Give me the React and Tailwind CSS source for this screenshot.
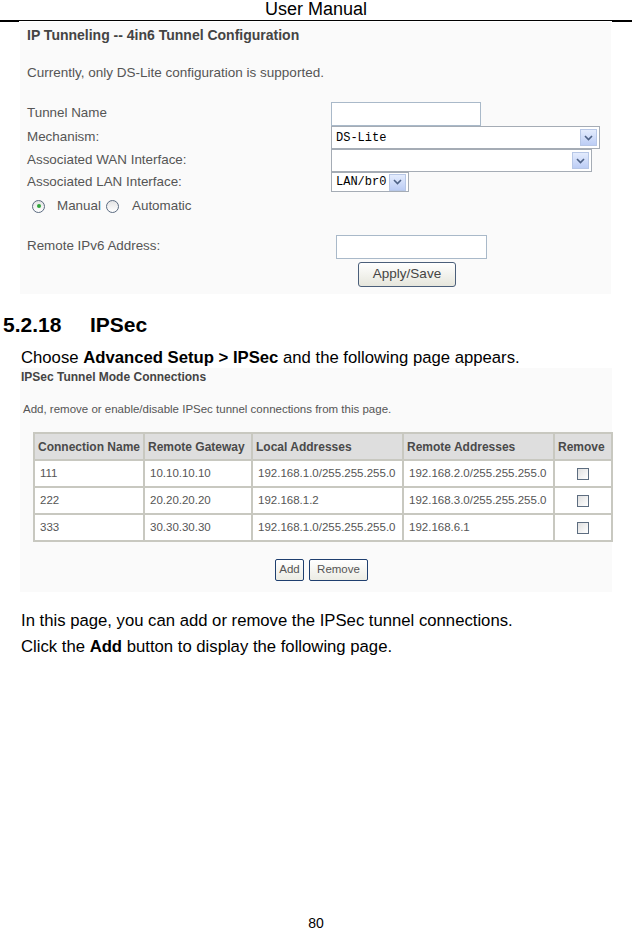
import React from 'react';

const shot = "font-['Liberation_Sans',Arial,sans-serif] text-[#555]";

// little blue chevron box used by the fake <select>s
const Arrow = () => (
  <span className="flex h-[17px] w-[17px] items-center justify-center border border-[#b7c7e6] bg-gradient-to-b from-[#e4ecfd] to-[#bccdf5]">
    <svg width="9" height="6" viewBox="0 0 9 6">
      <path d="M1 1 L4.5 4.5 L8 1" fill="none" stroke="#4d6185" strokeWidth="1.6" />
    </svg>
  </span>
);

const FakeSelect = ({ value, width }) => (
  <div
    className={`flex h-full items-center justify-between border border-[#a5acb5] bg-white pl-[4px] pr-[2px] ${width}`}
  >
    <span className="font-['Liberation_Mono',monospace] text-[12px] text-black">{value}</span>
    <Arrow />
  </div>
);

const Radio = ({ checked }) => (
  <span className="flex h-[13px] w-[13px] shrink-0 items-center justify-center rounded-full border border-[#5a6a80] bg-gradient-to-b from-[#e4e4e4] to-white">
    {checked && <span className="h-[4px] w-[4px] rounded-full bg-[#2fa53a]" />}
  </span>
);

const Row = ({ label, h, children }) => (
  <div className={`flex items-center ${h}`}>
    <div className="w-[304px] text-[13.4px]">{label}</div>
    {children}
  </div>
);

const tunnels = [
  { name: '111', gw: '10.10.10.10', local: '192.168.1.0/255.255.255.0', remote: '192.168.2.0/255.255.255.0' },
  { name: '222', gw: '20.20.20.20', local: '192.168.1.2', remote: '192.168.3.0/255.255.255.0' },
  { name: '333', gw: '30.30.30.30', local: '192.168.1.0/255.255.255.0', remote: '192.168.6.1' },
];

const th = 'border-2 border-[#c8c8c0] px-[3px] text-left font-bold text-[12px] text-[#4a4a4a] whitespace-nowrap';
const td = 'border-2 border-[#c8c8c0] px-[5px] text-[11.5px] whitespace-nowrap';

export default function App() {
  return (
    <div className="h-[932px] w-[632px] overflow-hidden bg-white font-['Liberation_Sans',Arial,sans-serif] text-black">
      {/* page header */}
      <div className="h-[20px] text-center text-[18px] leading-[18px]">User Manual</div>
      <div className="flex items-start">
        <div className="h-[2px] w-[19px] bg-black" />
        <div className="h-px flex-1 bg-black" />
        <div className="h-[2px] w-[20px] bg-black" />
      </div>

      {/* screenshot: 4in6 tunnel */}
      <div className={`ml-[20px] h-[272px] w-[591px] bg-[#fafafa] pl-[7px] pt-[5px] ${shot}`}>
        <div className="h-[16px] whitespace-nowrap text-[14px] font-bold leading-[16px] text-[#444]">
          IP Tunneling -- 4in6 Tunnel Configuration
        </div>
        <div className="mt-[22px] h-[16px] text-[13.5px] leading-[16px]">
          Currently, only DS-Lite configuration is supported.
        </div>
        <div className="mt-[20px]">
          <Row label="Tunnel Name" h="h-[25px]">
            <div className="h-[24px] w-[150px] border border-[#a9b9c9] bg-white" />
          </Row>
          <Row label="Mechanism:" h="h-[23px]">
            <FakeSelect value="DS-Lite" width="w-[269px]" />
          </Row>
          <Row label="Associated WAN Interface:" h="h-[23px]">
            <FakeSelect value="" width="w-[261px]" />
          </Row>
          <Row label="Associated LAN Interface:" h="h-[20px]">
            <FakeSelect value="LAN/br0" width="w-[78px]" />
          </Row>
          <div className="flex h-[28px] items-center pl-[5px] text-[13.4px]">
            <Radio checked />
            <span className="ml-[12px] w-[49px]">Manual</span>
            <Radio />
            <span className="ml-[13px]">Automatic</span>
          </div>
          <Row label="Remote IPv6 Address:" h="mt-[14px] h-[25px]">
            <div className="ml-[5px] h-[24px] w-[151px] border border-[#a9b9c9] bg-white" />
          </Row>
          <div className="mt-[2px] pl-[331px]">
            <button className="h-[25px] w-[98px] rounded-[3px] border border-[#4b5f7a] bg-gradient-to-b from-white to-[#e6e6dc] text-[13.5px] text-[#444]">
              Apply/Save
            </button>
          </div>
        </div>
      </div>

      {/* section heading */}
      <div className="mt-[18px] flex h-[26px] items-center pl-[3px] text-[21px] font-bold">
        <span className="w-[87px]">5.2.18</span>
        <span>IPSec</span>
      </div>
      <div className="mt-[11px] pl-[21px] text-[16.7px] leading-[18px]">
        Choose <b>Advanced Setup &gt; IPSec</b> and the following page appears.
      </div>

      {/* screenshot: IPSec connections */}
      <div className={`ml-[20px] mt-px h-[224px] w-[592px] bg-[#fafafa] pt-[2px] ${shot}`}>
        <div className="pl-[1px] text-[12px] font-bold leading-[14px] text-[#444]">IPSec Tunnel Mode Connections</div>
        <div className="mt-[18px] pl-[3px] text-[11.5px] leading-[14px]">
          Add, remove or enable/disable IPSec tunnel connections from this page.
        </div>
        <table className="ml-[13px] mt-[16px] w-[578px] table-fixed border-collapse border-2 border-[#c8c8c0]">
          <colgroup>
            <col className="w-[110px]" />
            <col className="w-[108px]" />
            <col className="w-[151px]" />
            <col className="w-[151px]" />
            <col className="w-[58px]" />
          </colgroup>
          <thead>
            <tr className="h-[27px] bg-[#dedede]">
              <th className={th}>Connection Name</th>
              <th className={th}>Remote Gateway</th>
              <th className={th}>Local Addresses</th>
              <th className={th}>Remote Addresses</th>
              <th className={th}>Remove</th>
            </tr>
          </thead>
          <tbody>
            {tunnels.map((t) => (
              <tr key={t.name} className="h-[27px] bg-white">
                <td className={td}>{t.name}</td>
                <td className={td}>{t.gw}</td>
                <td className={`${td} px-[3px]`}>{t.local}</td>
                <td className={`${td} px-[3px]`}>{t.remote}</td>
                <td className={td}>
                  <span className="mx-auto block h-[12px] w-[12px] border border-[#5d6d80] bg-gradient-to-br from-[#e0e0e0] to-white" />
                </td>
              </tr>
            ))}
          </tbody>
        </table>
        <div className="mt-[17px] flex gap-[5px] pl-[255px]">
          <button className="h-[22px] w-[29px] rounded-[2px] border border-[#1f3f6f] bg-gradient-to-b from-white to-[#ecece4] text-[11.5px] text-[#555]">
            Add
          </button>
          <button className="h-[22px] w-[59px] rounded-[2px] border border-[#1f3f6f] bg-gradient-to-b from-white to-[#ecece4] text-[11.5px] text-[#555]">
            Remove
          </button>
        </div>
      </div>

      {/* body text */}
      <div className="mt-[16px] pl-[21px] text-[16.7px] leading-[26px]">
        <p>In this page, you can add or remove the IPSec tunnel connections.</p>
        <p>
          Click the <b>Add</b> button to display the following page.
        </p>
      </div>

      <div className="mt-[255px] text-center text-[14px] leading-[16px]">80</div>
    </div>
  );
}
